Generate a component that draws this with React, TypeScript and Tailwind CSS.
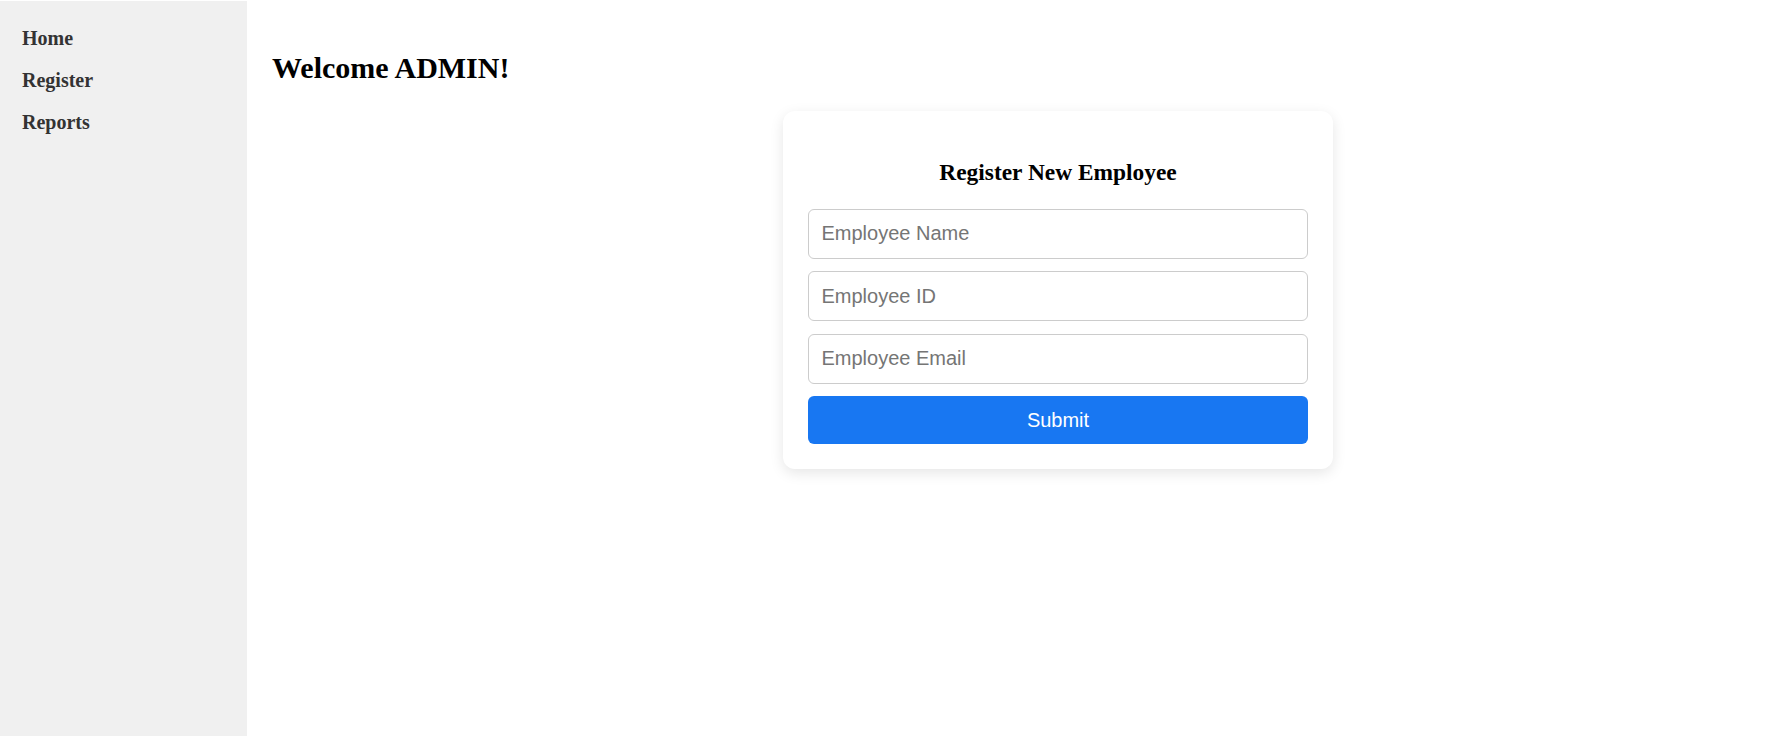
import { useState } from "react";

const navItems = ["Home", "Register", "Reports"];

const fields = [
	{ name: "name", placeholder: "Employee Name", type: "text" },
	{ name: "id", placeholder: "Employee ID", type: "text" },
	{ name: "email", placeholder: "Employee Email", type: "email" },
];

export default function App() {
	const [values, setValues] = useState<Record<string, string>>({});

	return (
		<div className="flex min-h-screen bg-white pt-px font-['Liberation_Serif','Times_New_Roman',serif]">
			<aside className="w-[247px] shrink-0 bg-[#f0f0f0] pt-[16px] pl-[22px]">
				<nav className="flex flex-col">
					{navItems.map((item) => (
						<a
							key={item}
							href="#"
							className="block h-[42px] text-[20px] leading-[42px] font-bold text-[#333]"
						>
							{item}
						</a>
					))}
				</nav>
			</aside>
			<main className="flex-1 p-[25px]">
				<h2 className="my-[25px] text-[30px] leading-[34.5px] font-bold text-black">
					Welcome ADMIN!
				</h2>
				<form
					className="ml-[511px] flex w-[550px] flex-col rounded-[12px] bg-white p-[25px] shadow-[0_4px_14px_rgba(0,0,0,0.1)]"
					onSubmit={(e) => e.preventDefault()}
				>
					<h3 className="mt-[23px] mb-[23px] h-[27px] text-center text-[23.4px] leading-[27px] font-bold text-black">
						Register New Employee
					</h3>
					<div className="flex flex-col gap-[12.5px] font-['Liberation_Sans',Arial,sans-serif]">
						{fields.map((f) => (
							<input
								key={f.name}
								type={f.type}
								placeholder={f.placeholder}
								value={values[f.name] ?? ""}
								onChange={(e) =>
									setValues((prev) => ({ ...prev, [f.name]: e.target.value }))
								}
								className="h-[50px] w-full rounded-[6px] border border-[#ccc] px-[12.5px] text-[20px] text-black outline-none placeholder:text-[#757575]"
							/>
						))}
						<button
							type="submit"
							className="h-[48px] w-full rounded-[6px] bg-[#1877f2] text-[20px] text-white"
						>
							Submit
						</button>
					</div>
				</form>
			</main>
		</div>
	);
}
